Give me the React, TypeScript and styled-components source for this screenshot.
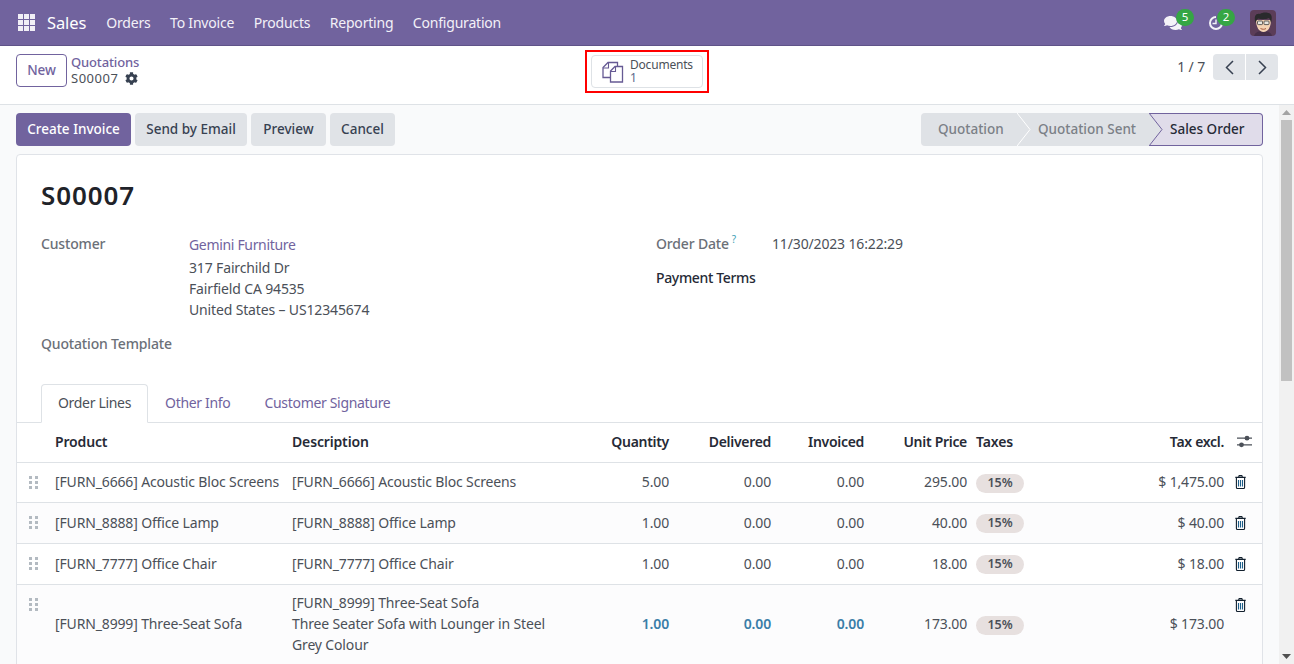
import React from "react";
import styled, { createGlobalStyle } from "styled-components";
import { FaCog, FaComments } from "react-icons/fa";

const Global = createGlobalStyle`
  html, body { margin: 0; padding: 0; height: 100%; overflow: hidden; }
  body { font-family: "Noto Sans", "Open Sans", sans-serif; font-size: 14px; letter-spacing: -0.15px; color: #4b5058; background: #fff; }
  * { box-sizing: border-box; }
  button { letter-spacing: inherit; }
`;

const Page = styled.div`
  width: 1294px; height: 664px; display: flex; flex-direction: column; overflow: hidden;
`;
const NavBar = styled.header`
  height: 46px; flex: none; background: #71639e; display: flex; align-items: center;
  padding: 0 18px 0 18px; color: #fff; border-bottom: 1px solid #5f5388;
`;
const AppsGrid = styled.div`
  display: grid; grid-template-columns: repeat(3, 5px); grid-auto-rows: 5px; gap: 1px; margin-right: 12px;
`;
const AppsCell = styled.span` background: #f1eff6; `;
const Brand = styled.span` font-size: 16.5px; margin-right: 20px; letter-spacing: -0.1px; `;
const NavItem = styled.span` font-size: 14px; margin-right: 19.5px; color: #f3f1f8; letter-spacing: -0.2px; `;
const NavRight = styled.div` margin-left: auto; display: flex; align-items: center; `;
const Systray = styled.div<{ $mr: number }>` position: relative; display: flex; margin-right: ${(p) => p.$mr}px; `;
const Badge = styled.span`
  position: absolute; left: 12px; top: -5px; width: 18px; height: 17px; border-radius: 9px; background: #35a644;
  color: #fff; font-size: 11.5px; line-height: 16px; text-align: center; letter-spacing: 0;
`;
const Avatar = styled.svg` width: 26px; height: 26px; border-radius: 4px; display: block; `;

const ControlPanel = styled.section`
  height: 59px; flex: none; display: grid; grid-template-columns: 1fr auto 1fr; background: #fff;
  border-bottom: 1px solid #dee2e6; padding: 8px 16px 0;
`;
const CpLeft = styled.div` display: flex; align-items: flex-start; gap: 4px; `;
const NewButton = styled.button`
  width: 51px; height: 33px; background: #fff; border: 1px solid #71639e; border-radius: 4px; color: #71639e;
  font: 500 13.5px "Noto Sans", sans-serif; padding: 0 0 2px;
`;
const Breadcrumb = styled.div` display: flex; flex-direction: column; line-height: 16px; font-size: 13px; `;
const Crumb = styled.span` color: #71639e; font-weight: 500; `;
const Current = styled.span` display: flex; align-items: center; gap: 7px; color: #4b5058; letter-spacing: 0.5px; `;
const CpCenter = styled.div` margin-top: -4px; `;
const Highlight = styled.div` width: 124px; height: 43px; border: 2px solid #f00; padding: 3px 4px; `;
const DocButton = styled.button`
  width: 112px; height: 33px; background: #fff; border: 1px solid #dee2e6; border-radius: 4px; display: flex; align-items: center;
  gap: 6px; padding: 0 0 0 10px; font-family: inherit; color: #4b5058;
`;
const DocText = styled.span` display: flex; flex-direction: column; align-items: flex-start; font-size: 12px; line-height: 13px; letter-spacing: -0.2px; margin-top: -2px; `;
const DocCount = styled.span` color: #5e6a8c; `;
const CpRight = styled.div` display: flex; justify-content: flex-end; align-items: flex-start; gap: 8px; `;
const Pager = styled.span` line-height: 26px; font-size: 14px; `;
const PagerGroup = styled.div` display: flex; gap: 1px; `;
const PagerBtn = styled.button<{ $side: "l" | "r" }>`
  width: 32px; height: 26px; border: 0; padding: 0; background: #e2e5e9; color: #374151; display: flex; align-items: center; justify-content: center;
  border-radius: ${(p) => (p.$side === "l" ? "4px 0 0 4px" : "0 4px 4px 0")};
`;

const BodyRow = styled.div` flex: 1; min-height: 0; display: flex; background: #f9fafb; `;
const Main = styled.main` flex: 1; min-width: 0; overflow: hidden; padding: 8px 16px 0 16px; `;
const ActionBar = styled.div` display: flex; justify-content: space-between; height: 33px; margin-bottom: 8px; `;
const Actions = styled.div` display: flex; gap: 4px; `;
const ActionBtn = styled.button<{ $primary?: boolean; $w: number }>`
  width: ${(p) => p.$w}px; height: 33px; border: 0; border-radius: 4px; padding: 0 0 2px; font: 500 13.5px "Noto Sans", sans-serif; letter-spacing: 0;
  background: ${(p) => (p.$primary ? "#71639e" : "#e0e3e7")}; color: ${(p) => (p.$primary ? "#fff" : "#374151")};
`;
const Status = styled.div` display: flex; height: 33px; `;
const Step = styled.div<{ $w: number; $pl: number; $first?: boolean }>`
  position: relative; width: ${(p) => p.$w}px; height: 33px; background: #dfe2e6; color: #7b8087; font-weight: 500; font-size: 13.5px; letter-spacing: 0;
  line-height: 33px; padding-left: ${(p) => p.$pl}px; border-radius: ${(p) => (p.$first ? "4px 0 0 4px" : "0")};
`;
const StepActive = styled.div`
  position: relative; width: 114px; height: 33px; background: #e0dcea; color: #262a36; font-weight: 500; font-size: 13.5px; letter-spacing: 0;
  line-height: 31px; padding-left: 21px; border: 1px solid #71639e; border-left: 0; border-radius: 0 4px 4px 0;
`;
const Chevron = styled.svg` position: absolute; top: 0; left: 100%; z-index: 1; display: block; `;

const Card = styled.div`
  background: #fff; border: 1px solid #e0e3e8; border-radius: 4px 4px 0 0; padding: 22px 0 0; height: 520px;
`;
const Title = styled.h1` margin: 0 0 20px 24px; font-size: 26px; font-weight: 600; line-height: 36px; color: #1f2329; letter-spacing: 0.9px; `;
const Fields = styled.div` display: grid; grid-template-columns: 615px 1fr; padding-left: 24px; `;
const FieldCol = styled.div` display: flex; flex-direction: column; `;
const Field = styled.div<{ $mb?: number }>` display: flex; margin-bottom: ${(p) => p.$mb ?? 0}px; `;
const Label = styled.div<{ $w: number; $dark?: boolean }>`
  width: ${(p) => p.$w}px; flex: none; font-weight: 500; line-height: 21px; color: ${(p) => (p.$dark ? "#262a36" : "#6b7078")};
  letter-spacing: ${(p) => (p.$dark ? "-0.35px" : "-0.17px")};
`;
const Help = styled.sup` color: #3f9fb5; font-size: 10px; margin-left: 3px; font-weight: 400; line-height: 0; `;
const Value = styled.div` line-height: 21px; `;
const LinkName = styled.div` color: #71639e; margin-bottom: 2px; margin-top: 1px; letter-spacing: -0.33px; `;

const Tabs = styled.div` display: flex; height: 39px; margin-top: 30px; padding-left: 24px; border-bottom: 1px solid #dee2e6; `;
const Tab = styled.div<{ $active?: boolean }>`
  height: 39px; padding: 0 16px; line-height: 36px; letter-spacing: -0.32px; color: ${(p) => (p.$active ? "#4b5058" : "#71639e")};
  border: 1px solid ${(p) => (p.$active ? "#dee2e6" : "transparent")}; border-bottom-color: ${(p) => (p.$active ? "#fff" : "transparent")};
  border-radius: 4px 4px 0 0;
`;
const Table = styled.table` width: 100%; table-layout: fixed; border-collapse: collapse; `;
const Th = styled.th<{ $right?: boolean }>`
  height: 39px; padding: 0 8px 2px; font-weight: 600; color: #262a36; font-size: 14px; white-space: nowrap;
  letter-spacing: ${(p) => (p.$right ? "-0.3px" : "-0.15px")};
  text-align: ${(p) => (p.$right ? "right" : "left")}; border-bottom: 1px solid #dee2e6;
`;
const ThTaxes = styled(Th)` padding-left: 1px; `;
const ThOptions = styled(Th)` padding: 0 0 2px 5px; `;
const Row = styled.tr<{ $even?: boolean; $h: number }>`
  height: ${(p) => p.$h}px; background: ${(p) => (p.$even ? "#fcfcfd" : "#fff")};
`;
const Td = styled.td<{ $right?: boolean; $blue?: boolean }>`
  padding: 0 8px 1px; line-height: 21px; border-bottom: 1px solid #dee2e6;
  text-align: ${(p) => (p.$right ? "right" : "left")}; white-space: nowrap; overflow: hidden;
  color: ${(p) => (p.$blue ? "#3a7ea8" : "#4b5058")}; font-weight: ${(p) => (p.$blue ? 600 : 400)};
`;
const TdTaxes = styled(Td)` padding-left: 1px; padding-right: 0; `;
const TdHandle = styled(Td)` padding: 0 0 0 12px; `;
const TdTrash = styled(Td)` padding: 0 0 0 3px; `;
const TopHandle = styled(TdHandle)` vertical-align: top; padding-top: 13px; `;
const TopTrash = styled(TdTrash)` vertical-align: top; padding-top: 13px; `;
const Pill = styled.span`
  display: inline-block; height: 19px; line-height: 18px; width: 48px; text-align: center; border-radius: 10px; background: #e7e0df; font-size: 12.5px; font-weight: 600; color: #4b5058; letter-spacing: 0;
`;
const HandleGrid = styled.div` display: grid; grid-template-columns: repeat(2, 3px); grid-auto-rows: 3px; gap: 2px 3px; `;
const Dot = styled.i` background: #b3bac1; display: block; `;
const Scrollbar = styled.div` width: 15px; flex: none; background: #f1f1f1; display: flex; flex-direction: column; align-items: center; `;
const ScrollThumb = styled.div` width: 11px; height: 261px; background: #c1c1c1; `;
const ScrollEnd = styled.div` flex: none; height: 15px; display: flex; align-items: center; justify-content: center; `;
const Spacer = styled.div` flex: 1; `;
const IconBlock = styled.svg` display: block; `;

const Handle = () => (
  <HandleGrid>{Array.from({ length: 6 }, (_, i) => <Dot key={i} />)}</HandleGrid>
);
const Trash = () => (
  <IconBlock width="11" height="14" viewBox="0 0 11 14">
    <path d="M3.6 1.8 4.2.6h2.6l.6 1.2M.3 2.4h10.4M1.4 3v9.2c0 .7.4 1.3 1 1.3h6.2c.6 0 1-.6 1-1.3V3" fill="none" stroke="#12202e" strokeWidth="1.1" />
    <path d="M3.5 5v6.5M5.5 5v6.5M7.5 5v6.5" stroke="#1d5f8a" strokeWidth="1.1" />
  </IconBlock>
);
const Sliders = () => (
  <IconBlock width="15" height="13" viewBox="0 0 15 13">
    <path d="M0 3.2h15M0 9.8h15" stroke="#4b5058" strokeWidth="1.2" />
    <circle cx="10" cy="3.2" r="2.4" fill="#4b5058" />
    <circle cx="4.5" cy="9.8" r="2.4" fill="#4b5058" />
  </IconBlock>
);
const lines = [
  { code: "[FURN_6666] Acoustic Bloc Screens", q: "5.00", up: "295.00", t: "$ 1,475.00", h: 40 },
  { code: "[FURN_8888] Office Lamp", q: "1.00", up: "40.00", t: "$ 40.00", h: 41 },
  { code: "[FURN_7777] Office Chair", q: "1.00", up: "18.00", t: "$ 18.00", h: 41 },
];

export default function App() {
  return (
    <Page>
      <Global />
      <NavBar>
        <AppsGrid>{Array.from({ length: 9 }, (_, i) => <AppsCell key={i} />)}</AppsGrid>
        <Brand>Sales</Brand>
        {["Orders", "To Invoice", "Products", "Reporting", "Configuration"].map((n) => <NavItem key={n}>{n}</NavItem>)}
        <NavRight>
          <Systray $mr={23}>
            <FaComments size={18} color="#f4f2f8" />
            <Badge>5</Badge>
          </Systray>
          <Systray $mr={27}>
            <svg width="18" height="18" viewBox="0 0 18 18"><path d="M11 3a6 6 0 1 0 6 6" fill="none" stroke="#f4f2f8" strokeWidth="2" /><path d="M11 5.500v4H7.500" fill="none" stroke="#f4f2f8" strokeWidth="1.4" /></svg>
            <Badge>2</Badge>
          </Systray>
          <Avatar viewBox="0 0 26 26">
            <rect width="26" height="26" fill="#5b3d58" />
            <path d="M4 26c1-4 5-5 9-5s8 1 9 5z" fill="#46304a" />
            <path d="M6 10c0 7 3 12 7.500 12S21 17 21 10z" fill="#f4d3b4" />
            <path d="M5.500 13C3.500 6 6 3 10 4c3-2.500 11-2 11.500 2 .5 2 0 5-.5 7-.5-2-1-4-2-5-3 1.500-8 1.500-11 .5-1 1-2 3-2.500 4.500z" fill="#2a2a2c" />
            <rect x="7.500" y="11" width="5" height="3.600" rx=".8" fill="#e6e6e0" stroke="#3a3a3a" strokeWidth=".8" />
            <rect x="14" y="11" width="5" height="3.600" rx=".8" fill="#e6e6e0" stroke="#3a3a3a" strokeWidth=".8" />
            <path d="M10.500 18.500c2 1 4 1 5.500 0" fill="none" stroke="#a4583e" strokeWidth="1" />
          </Avatar>
        </NavRight>
      </NavBar>
      <ControlPanel>
        <CpLeft>
          <NewButton>New</NewButton>
          <Breadcrumb>
            <Crumb>Quotations</Crumb>
            <Current>S00007 <FaCog size={13} color="#374151" /></Current>
          </Breadcrumb>
        </CpLeft>
        <CpCenter>
          <Highlight>
            <DocButton>
              <svg width="22" height="22" viewBox="0 0 22 22">
                <path d="M8 16.500H1V6.500L6 1.500h9.500v4" fill="none" stroke="#665a94" strokeWidth="1.3" />
                <path d="M1 7h5.500V1.500" fill="none" stroke="#665a94" strokeWidth="1.1" />
                <path d="M8.500 21V10l4.500-4.500h7.500V21z" fill="#fff" stroke="#665a94" strokeWidth="1.3" />
                <path d="M8.500 10.500h5V5.500" fill="none" stroke="#665a94" strokeWidth="1.1" />
              </svg>
              <DocText>Documents<DocCount>1</DocCount></DocText>
            </DocButton>
          </Highlight>
        </CpCenter>
        <CpRight>
          <Pager>1 / 7</Pager>
          <PagerGroup>
            <PagerBtn $side="l"><svg width="9" height="15" viewBox="0 0 9 15"><path d="M8 1 1.500 7.500 8 14" fill="none" stroke="#374151" strokeWidth="1.500" /></svg></PagerBtn>
            <PagerBtn $side="r"><svg width="9" height="15" viewBox="0 0 9 15"><path d="M1 1l6.500 6.500L1 14" fill="none" stroke="#374151" strokeWidth="1.500" /></svg></PagerBtn>
          </PagerGroup>
        </CpRight>
      </ControlPanel>
      <BodyRow>
        <Main>
          <ActionBar>
            <Actions>
              <ActionBtn $primary $w={115}>Create Invoice</ActionBtn>
              <ActionBtn $w={112}>Send by Email</ActionBtn>
              <ActionBtn $w={75}>Preview</ActionBtn>
              <ActionBtn $w={65}>Cancel</ActionBtn>
            </Actions>
            <Status>
              <Step $w={96} $pl={17} $first>Quotation
                <Chevron width="14" height="33" viewBox="0 0 14 33"><path d="M0 0 13 16.500 0 33z" fill="#dfe2e6" /><path d="M0 0 13 16.500 0 33" fill="none" stroke="#fff" /></Chevron>
              </Step>
              <Step $w={132} $pl={21}>Quotation Sent
                <Chevron width="14" height="33" viewBox="0 0 14 33"><path d="M0 0 13 16.500 0 33z" fill="#dfe2e6" /><path d="M0 0 13 16.500 0 33" fill="none" stroke="#71639e" /></Chevron>
              </Step>
              <StepActive>Sales Order</StepActive>
            </Status>
          </ActionBar>
          <Card>
            <Title>S00007</Title>
            <Fields>
              <FieldCol>
                <Field $mb={13}>
                  <Label $w={148}>Customer</Label>
                  <Value>
                    <LinkName>Gemini Furniture</LinkName>
                    317 Fairchild Dr<br />Fairfield CA 94535<br />United States – US12345674
                  </Value>
                </Field>
                <Field><Label $w={148}>Quotation Template</Label></Field>
              </FieldCol>
              <FieldCol>
                <Field $mb={13}>
                  <Label $w={116}>Order Date<Help>?</Help></Label>
                  <Value>11/30/2023 16:22:29</Value>
                </Field>
                <Field><Label $w={116} $dark>Payment Terms</Label></Field>
              </FieldCol>
            </Fields>
            <Tabs>
              <Tab $active>Order Lines</Tab>
              <Tab>Other Info</Tab>
              <Tab>Customer Signature</Tab>
            </Tabs>
            <Table>
              <colgroup>
                <col width="30" /><col width="237" /><col width="306" /><col width="87" /><col width="102" /><col width="93" /><col width="103" /><col width="60" /><col width="197" /><col width="30" />
              </colgroup>
              <thead>
                <tr>
                  <Th />
                  <Th>Product</Th>
                  <Th>Description</Th>
                  <Th $right>Quantity</Th>
                  <Th $right>Delivered</Th>
                  <Th $right>Invoiced</Th>
                  <Th $right>Unit Price</Th>
                  <ThTaxes>Taxes</ThTaxes>
                  <Th $right>Tax excl.</Th>
                  <ThOptions><Sliders /></ThOptions>
                </tr>
              </thead>
              <tbody>
                {lines.map((l, i) => (
                  <Row key={l.code} $h={l.h} $even={i % 2 === 1}>
                    <TdHandle><Handle /></TdHandle>
                    <Td>{l.code}</Td>
                    <Td>{l.code}</Td>
                    <Td $right>{l.q}</Td>
                    <Td $right>0.00</Td>
                    <Td $right>0.00</Td>
                    <Td $right>{l.up}</Td>
                    <TdTaxes><Pill>15%</Pill></TdTaxes>
                    <Td $right>{l.t}</Td>
                    <TdTrash><Trash /></TdTrash>
                  </Row>
                ))}
                <Row $h={80} $even>
                  <TopHandle><Handle /></TopHandle>
                  <Td>[FURN_8999] Three-Seat Sofa</Td>
                  <Td>[FURN_8999] Three-Seat Sofa<br />Three Seater Sofa with Lounger in Steel<br />Grey Colour</Td>
                  <Td $right $blue>1.00</Td>
                  <Td $right $blue>0.00</Td>
                  <Td $right $blue>0.00</Td>
                  <Td $right>173.00</Td>
                  <TdTaxes><Pill>15%</Pill></TdTaxes>
                  <Td $right>$ 173.00</Td>
                  <TopTrash><Trash /></TopTrash>
                </Row>
              </tbody>
            </Table>
          </Card>
        </Main>
        <Scrollbar>
          <ScrollEnd><svg width="9" height="5"><path d="M4.500 0 9 5H0z" fill="#a3a3a3" /></svg></ScrollEnd>
          <ScrollThumb />
          <Spacer />
          <ScrollEnd><svg width="9" height="5"><path d="M0 0h9L4.500 5z" fill="#505050" /></svg></ScrollEnd>
        </Scrollbar>
      </BodyRow>
    </Page>
  );
}
